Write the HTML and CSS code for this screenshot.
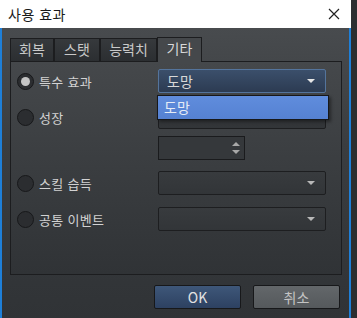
FILE: index.html
```html
<!DOCTYPE html>
<html lang="ko">
<head>
    <meta charset="UTF-8">
    <title>사용 효과</title>
    <link rel="stylesheet" href="styles.css">
</head>
<body>
    <div class="window">
        <div class="title-bar">
            <span class="title">사용 효과</span>
            <svg class="close" width="12" height="12" viewBox="0 0 12 12">
                <path d="M1 1 L11 11 M11 1 L1 11" stroke="#222" stroke-width="1.2" fill="none"/>
            </svg>
        </div>
        <div class="body">
            <div class="tabs">
                <div class="tab tab-1">회복</div>
                <div class="tab tab-2">스탯</div>
                <div class="tab tab-3">능력치</div>
                <div class="tab tab-4 active">기타</div>
            </div>
            <div class="pane">
                <div class="row first">
                    <label class="option"><span class="radio checked"></span>특수 효과</label>
                    <div class="combo focused">
                        <span>도망</span>
                        <span class="arrow"></span>
                        <div class="popup">도망</div>
                    </div>
                </div>
                <div class="row">
                    <label class="option"><span class="radio"></span>성장</label>
                    <div class="combo"><span></span><span class="arrow"></span></div>
                </div>
                <div class="row spin-row">
                    <span></span>
                    <div class="spinbox">
                        <span class="spin-arrows">
                            <span class="up"></span>
                            <span class="down"></span>
                        </span>
                    </div>
                </div>
                <div class="row">
                    <label class="option"><span class="radio"></span>스킬 습득</label>
                    <div class="combo"><span></span><span class="arrow"></span></div>
                </div>
                <div class="row">
                    <label class="option"><span class="radio"></span>공통 이벤트</label>
                    <div class="combo"><span></span><span class="arrow"></span></div>
                </div>
            </div>
            <div class="buttons">
                <button class="btn ok">OK</button>
                <button class="btn cancel">취소</button>
            </div>
        </div>
    </div>
</body>
</html>
```

FILE: styles.css
```css
/* General */
body {
    margin: 0;
    background: #2c2e31;
    font-family: 'Noto Sans CJK KR', 'Noto Sans', sans-serif;
    font-size: 13px;
    width: 357px;
    height: 318px;
    overflow: hidden;
}

.window {
    width: 351px;
    height: 318px;
    display: flex;
    flex-direction: column;
}

/* Title bar */
.title-bar {
    height: 28px;
    background: #ffffff;
    display: flex;
    align-items: center;
    justify-content: space-between;
    padding: 0 11px 0 8px;
    box-sizing: border-box;
}

.title {
    color: #1a1a1a;
    font-size: 14px;
    letter-spacing: 0.5px;
}

/* Body */
.body {
    flex: 1;
    background: linear-gradient(#484b4e, #3a3d40 40%, #303336);
    border-left: 2px solid #1e7fd8;
    border-right: 2px solid #1e7fd8;
    padding: 9px 7px 0 8px;
    display: flex;
    flex-direction: column;
}

/* Tabs */
.tabs {
    display: flex;
    align-items: flex-end;
    height: 24px;
    position: relative;
    z-index: 1;
}

.tab {
    height: 23px;
    box-sizing: border-box;
    background: linear-gradient(#36393c, #2b2e31);
    border: 1px solid #1c1d1f;
    border-bottom: none;
    color: #c9c9c9;
    line-height: 21px;
    font-size: 14px;
    text-align: center;
}

.tab-1 { width: 44px; }
.tab-2 { width: 46px; }
.tab-3 { width: 57px; }
.tab-4 { width: 45px; }

.tab.active {
    height: 25px;
    margin-bottom: -1px;
    background: #45484b;
    color: #d8d8d8;
}

/* Pane */
.pane {
    width: 332px;
    height: 214px;
    box-sizing: border-box;
    border: 1px solid #1c1d1f;
    background: linear-gradient(#45484b, #3a3d40 50%, #303336);
    padding: 7px 0 0 6px;
    display: flex;
    flex-direction: column;
}

.row {
    display: grid;
    grid-template-columns: 141px 168px;
    align-items: center;
    height: 24px;
    margin-bottom: 12px;
}

.row.spin-row {
    margin-top: -5px;
    margin-bottom: 11px;
}

.option {
    display: flex;
    align-items: center;
    gap: 5px;
    color: #d2d2d2;
    font-size: 13px;
    letter-spacing: 0.3px;
}

.radio {
    width: 15px;
    height: 15px;
    border-radius: 50%;
    background: #2b2d30;
    border: 1px solid #17181a;
    display: flex;
    align-items: center;
    justify-content: center;
}

.radio.checked::after {
    content: '';
    width: 9px;
    height: 9px;
    border-radius: 50%;
    background: #c4c4c4;
}

/* Combo boxes */
.combo {
    height: 24px;
    box-sizing: border-box;
    border: 1px solid #1d1e20;
    border-radius: 2px;
    background: linear-gradient(#383b3e, #323538);
    display: flex;
    align-items: center;
    justify-content: space-between;
    padding: 0 10px 0 8px;
    color: #d8d8d8;
    font-size: 14px;
    position: relative;
}

.combo.focused {
    border-color: #54749c;
    background: linear-gradient(#3b4f6b, #2c3b52);
}

.arrow {
    width: 0;
    height: 0;
    border-left: 4px solid transparent;
    border-right: 4px solid transparent;
    border-top: 4px solid #b8b8b8;
}

.combo.focused .arrow {
    border-top-color: #e6e6e6;
}

.popup {
    position: absolute;
    left: -2px;
    top: 25px;
    width: 172px;
    height: 25px;
    box-sizing: border-box;
    background: linear-gradient(#608ddd, #5581d2);
    border: 1px solid #17181a;
    box-shadow: 2px 2px 3px rgba(0, 0, 0, 0.4);
    color: #e6ecf6;
    padding-left: 6px;
    line-height: 22px;
    font-size: 14px;
    z-index: 2;
}

/* Spin box */
.spinbox {
    width: 87px;
    height: 24px;
    box-sizing: border-box;
    border: 1px solid #1a1b1d;
    background: #35383b;
    display: flex;
    justify-content: flex-end;
    align-items: center;
    padding-right: 4px;
}

.spin-arrows {
    display: flex;
    flex-direction: column;
    gap: 4px;
}

.spin-arrows .up {
    border-left: 4px solid transparent;
    border-right: 4px solid transparent;
    border-bottom: 4px solid #a8a8a8;
}

.spin-arrows .down {
    border-left: 4px solid transparent;
    border-right: 4px solid transparent;
    border-top: 4px solid #a8a8a8;
}

/* Buttons */
.buttons {
    display: flex;
    justify-content: flex-end;
    gap: 12px;
    padding: 10px 2px 0 0;
}

.btn {
    width: 87px;
    height: 24px;
    border: 1px solid #17181a;
    border-radius: 2px;
    font-family: 'Noto Sans CJK KR', 'Noto Sans', sans-serif;
    font-size: 14px;
    padding: 0;
}

.btn.ok {
    background: linear-gradient(#3e5779, #2d4161);
    color: #e2e2e2;
}

.btn.cancel {
    background: linear-gradient(#63676a, #55595c);
    color: #c4c4c4;
}
```
